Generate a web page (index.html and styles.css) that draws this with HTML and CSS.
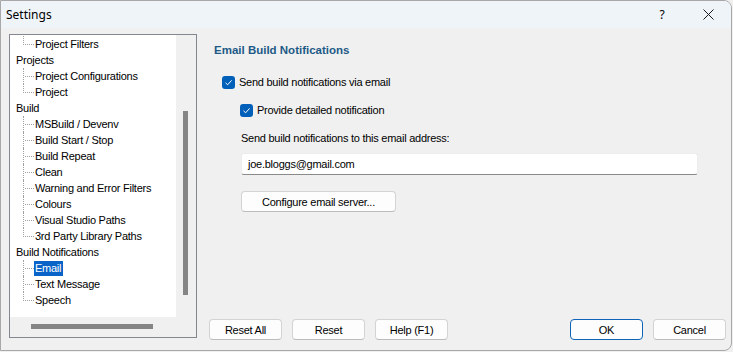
FILE: index.html
```html
<!DOCTYPE html>
<html lang="en">
<head>
    <meta charset="UTF-8">
    <title>Settings</title>
    <link rel="stylesheet" href="styles.css">
</head>
<body>
    <div class="window">
        <div class="titlebar">
            <span class="title">Settings</span>
            <span class="help">?</span>
            <span class="close">
                <svg width="11" height="11" viewBox="0 0 11 11"><path d="M0.5 0.5 L10.5 10.5 M10.5 0.5 L0.5 10.5" stroke="#1a1a1a" stroke-width="1" fill="none"/></svg>
            </span>
        </div>

        <div class="content">
            <div class="tree">
                <div class="tree-view">
                    <div class="node child last"><span class="branch"></span><span class="label">Project Filters</span></div>
                    <div class="node root"><span class="label">Projects</span></div>
                    <div class="node child"><span class="branch"></span><span class="label">Project Configurations</span></div>
                    <div class="node child last"><span class="branch"></span><span class="label">Project</span></div>
                    <div class="node root"><span class="label">Build</span></div>
                    <div class="node child"><span class="branch"></span><span class="label">MSBuild / Devenv</span></div>
                    <div class="node child"><span class="branch"></span><span class="label">Build Start / Stop</span></div>
                    <div class="node child"><span class="branch"></span><span class="label">Build Repeat</span></div>
                    <div class="node child"><span class="branch"></span><span class="label">Clean</span></div>
                    <div class="node child"><span class="branch"></span><span class="label">Warning and Error Filters</span></div>
                    <div class="node child"><span class="branch"></span><span class="label">Colours</span></div>
                    <div class="node child"><span class="branch"></span><span class="label">Visual Studio Paths</span></div>
                    <div class="node child last"><span class="branch"></span><span class="label">3rd Party Library Paths</span></div>
                    <div class="node root"><span class="label">Build Notifications</span></div>
                    <div class="node child"><span class="branch"></span><span class="label selected">Email</span></div>
                    <div class="node child"><span class="branch"></span><span class="label">Text Message</span></div>
                    <div class="node child last"><span class="branch"></span><span class="label">Speech</span></div>
                </div>
                <div class="vscroll"><div class="vthumb"></div></div>
                <div class="hscroll"><div class="hthumb"></div></div>
                <div class="corner"></div>
            </div>

            <div class="page">
                <div class="heading">Email Build Notifications</div>

                <label class="check top-check">
                    <span class="box"><svg width="13" height="13" viewBox="0 0 13 13"><path d="M3.5 6.8 L5.6 8.8 L9.6 4.4" stroke="#fff" stroke-width="1" fill="none"/></svg></span>
                    <span>Send build notifications via email</span>
                </label>

                <label class="check sub-check">
                    <span class="box"><svg width="13" height="13" viewBox="0 0 13 13"><path d="M3.5 6.8 L5.6 8.8 L9.6 4.4" stroke="#fff" stroke-width="1" fill="none"/></svg></span>
                    <span>Provide detailed notification</span>
                </label>

                <div class="field-label">Send build notifications to this email address:</div>
                <div class="text-input">joe.bloggs@gmail.com</div>

                <button class="btn configure">Configure email server...</button>

                <div class="button-bar">
                    <button class="btn">Reset All</button>
                    <button class="btn">Reset</button>
                    <button class="btn">Help (F1)</button>
                    <button class="btn default push">OK</button>
                    <button class="btn">Cancel</button>
                </div>
            </div>
        </div>
    </div>
</body>
</html>
```

FILE: styles.css
```css
body {
    margin: 0;
    background: #f0f0f0;
    font-family: "Liberation Sans", Arial, sans-serif;
    font-size: 11px;
    letter-spacing: -0.25px;
    color: #000;
}
.window {
    width: 732px;
    height: 351px;
    box-sizing: border-box;
    border: 1px solid #a8a8a8;
    border-radius: 0 8px 8px 0;
    background: #f0f0f0;
    overflow: hidden;
    display: flex;
    flex-direction: column;
}
.titlebar {
    height: 27px;
    flex-shrink: 0;
    background: #eff4f9;
    display: flex;
    align-items: center;
    padding-left: 5px;
    font-family: "Noto Sans", sans-serif;
    font-size: 12px;
    letter-spacing: 0;
}
.title {
    flex: 1;
}
.help {
    width: 46px;
    text-align: center;
    font-size: 12px;
}
.close {
    width: 46px;
    height: 27px;
    display: flex;
    align-items: center;
    justify-content: center;
}
.content {
    flex: 1;
    display: flex;
    gap: 12px;
    padding: 6px 5px 10px 8px;
}

/* tree panel */
.tree {
    width: 188px;
    height: 304px;
    box-sizing: border-box;
    border: 1px solid #828790;
    display: grid;
    grid-template-columns: 166px 20px;
    grid-template-rows: 282px 20px;
    flex-shrink: 0;
}
.tree-view {
    background: #fff;
    padding-top: 1px;
    overflow: hidden;
}
.vscroll, .hscroll, .corner {
    background: #f0f0f0;
    position: relative;
}
.vthumb {
    position: absolute;
    left: 7px;
    top: 76px;
    width: 5px;
    height: 184px;
    background: #858585;
}
.hthumb {
    position: absolute;
    left: 21px;
    top: 7px;
    width: 122px;
    height: 5px;
    background: #858585;
}
.node {
    height: 16px;
    display: flex;
    align-items: center;
    white-space: nowrap;
}
.root {
    padding-left: 5px;
}
.child {
    padding-left: 13px;
}
.branch {
    position: relative;
    width: 10px;
    height: 16px;
    margin-right: 1px;
    border-left: 1px dotted #a0a0a0;
    box-sizing: border-box;
    flex-shrink: 0;
}
.last .branch {
    height: 9px;
    align-self: flex-start;
}
.branch::after {
    content: "";
    position: absolute;
    left: 1px;
    top: 8px;
    width: 9px;
    border-top: 1px dotted #a0a0a0;
}
.label {
    padding: 1px 2px 1px 1px;
    line-height: 13px;
}
.selected {
    background: #0a64c8;
    color: #fff;
}

/* right page */
.page {
    flex: 1;
    display: flex;
    flex-direction: column;
    align-items: flex-start;
}
.heading {
    margin: 9px 0 0 5px;
    line-height: 14px;
    font-weight: bold;
    font-size: 11.5px;
    letter-spacing: 0;
    color: #1d5a87;
}
.check {
    display: flex;
    align-items: center;
    gap: 4px;
    line-height: 14px;
}
.box {
    width: 13px;
    height: 13px;
    border-radius: 3px;
    background: #005fb8;
    display: flex;
}
.top-check {
    margin: 18px 0 0 13px;
}
.sub-check {
    margin: 14px 0 0 31px;
}
.field-label {
    margin: 14px 0 0 32px;
    line-height: 14px;
}
.text-input {
    margin: 8px 0 0 32px;
    width: 457px;
    height: 22px;
    box-sizing: border-box;
    padding-left: 6px;
    line-height: 21px;
    background: #fff;
    border: 1px solid #ececec;
    border-bottom-color: #8a8a8a;
    border-radius: 3px;
}
.btn {
    height: 21px;
    width: 73px;
    padding: 0;
    font-family: "Liberation Sans", Arial, sans-serif;
    font-size: 11px;
    letter-spacing: -0.25px;
    color: #000;
    background: #fdfdfd;
    border: 1px solid #d3d3d3;
    border-bottom-color: #bcbcbc;
    border-radius: 4px;
}
.configure {
    width: 155px;
    margin: 16px 0 0 32px;
}
.button-bar {
    margin-top: auto;
    align-self: stretch;
    display: flex;
    gap: 10px;
}
.push {
    margin-left: auto;
}
.default {
    border-color: #0f63b8;
}
```
